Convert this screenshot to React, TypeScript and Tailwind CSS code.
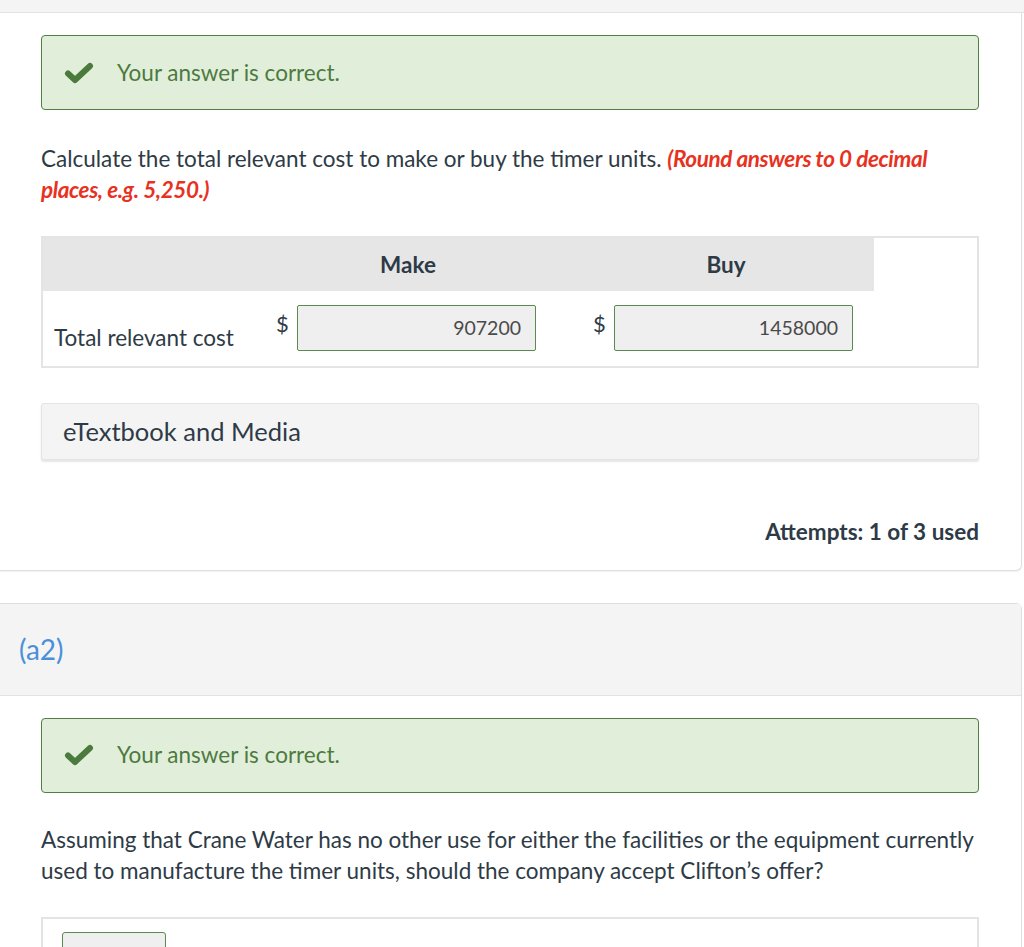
import React from 'react';

function CheckIcon() {
  return (
    <svg width="30" height="22" viewBox="0 0 30 22" className="shrink-0">
      <path
        d="M4 11.5 L11 18 L26 4"
        fill="none"
        stroke="#4b7a3d"
        strokeWidth="6"
        strokeLinecap="round"
        strokeLinejoin="round"
      />
    </svg>
  );
}

function CorrectAlert() {
  return (
    <div className="flex h-[75px] items-center rounded-[4px] border border-[#4f7f45] bg-[#e1efda] pl-[22px]">
      <CheckIcon />
      <span className="ml-[23px] text-[22.5px] text-[#4d7a40]">Your answer is correct.</span>
    </div>
  );
}

function MoneyInput({ value }: { value: string }) {
  return (
    <div className="flex items-start">
      <span className="mt-[2px] w-[22px] pl-[1px] text-[22px] text-[#2e3b46]">$</span>
      <div className="flex h-[46px] w-[239px] items-center justify-end rounded-[2px] border border-[#5b8a4f] bg-[#efefef] pr-[14px] text-[19.5px] text-[#4a4a4a]">
        {value}
      </div>
    </div>
  );
}

export default function App() {
  return (
    <div
      className="min-h-[947px] bg-white text-[#2e3b46]"
      style={{ fontFamily: 'Lato, "Open Sans", sans-serif' }}
    >
      <div className="h-[13px] border-b border-[#e2e2e2] bg-[#f4f4f4]" />

      {/* part (a1) card */}
      <div className="w-[1022px] rounded-br-[6px] border-r border-b border-[#dedede] pt-[22px] pr-[42px] pb-[21px] pl-[41px] shadow-[0_1px_2px_rgba(0,0,0,0.06)]">
        <CorrectAlert />

        <p className="mt-[33px] text-[22.5px] leading-[31px] text-[#2e3b46]">
          Calculate the total relevant cost to make or buy the timer units.{' '}
          <span className="font-bold italic tracking-[-0.4px] text-[#e8321f]">
            (Round answers to 0 decimal places, e.g. 5,250.)
          </span>
        </p>

        <div className="mt-[31px] border-2 border-[#e4e4e4]">
          <div className="flex h-[53px]">
            <div className="flex w-[831px] items-center bg-[#e6e6e6] text-[22.5px] font-bold text-[#2e3b46]">
              <div className="w-[219px]" />
              <div className="w-[292px] text-center">Make</div>
              <div className="w-[25px]" />
              <div className="w-[294px] text-center">Buy</div>
            </div>
          </div>
          <div className="flex h-[75px] pt-[14px]">
            <div className="flex w-[219px] items-end pb-[11px] pl-[11px] text-[22.5px]">Total relevant cost</div>
            <div className="w-[317px] pl-[13px]">
              <MoneyInput value="907200" />
            </div>
            <div className="pl-[13px]">
              <MoneyInput value="1458000" />
            </div>
          </div>
        </div>

        <div className="mt-[35px] flex h-[57px] items-center rounded-[3px] border border-[#e4e4e4] bg-[#f4f4f4] pl-[21px] text-[25.5px] text-[#2e3b46] shadow-[0_2px_2px_rgba(0,0,0,0.1)]">
          eTextbook and Media
        </div>

        <div className="mt-[55px] text-right text-[22.5px] font-bold text-[#2e3b46]">Attempts: 1 of 3 used</div>
      </div>

      {/* part (a2) card */}
      <div className="mt-[32px] w-[1022px] rounded-tr-[6px] border-t border-r border-[#dedede]">
        <div className="flex h-[92px] items-center border-b border-[#e2e2e2] bg-[#f4f4f4] pl-[19px] text-[28px] text-[#4a90d9]">
          (a2)
        </div>
        <div className="pt-[22px] pr-[42px] pl-[41px]">
          <CorrectAlert />
          <p className="mt-[31px] text-[22.5px] leading-[31px] text-[#2e3b46]">
            Assuming that Crane Water has no other use for either the facilities or the equipment currently used to
            manufacture the timer units, should the company accept Clifton’s offer?
          </p>
          <div className="mt-[31px] h-[60px] border-2 border-b-0 border-[#e4e4e4] pt-[13px] pl-[19px]">
            <div className="h-[30px] w-[104px] rounded-t-[3px] border border-[#5b8a4f] bg-[#efefef]" />
          </div>
        </div>
      </div>
    </div>
  );
}
